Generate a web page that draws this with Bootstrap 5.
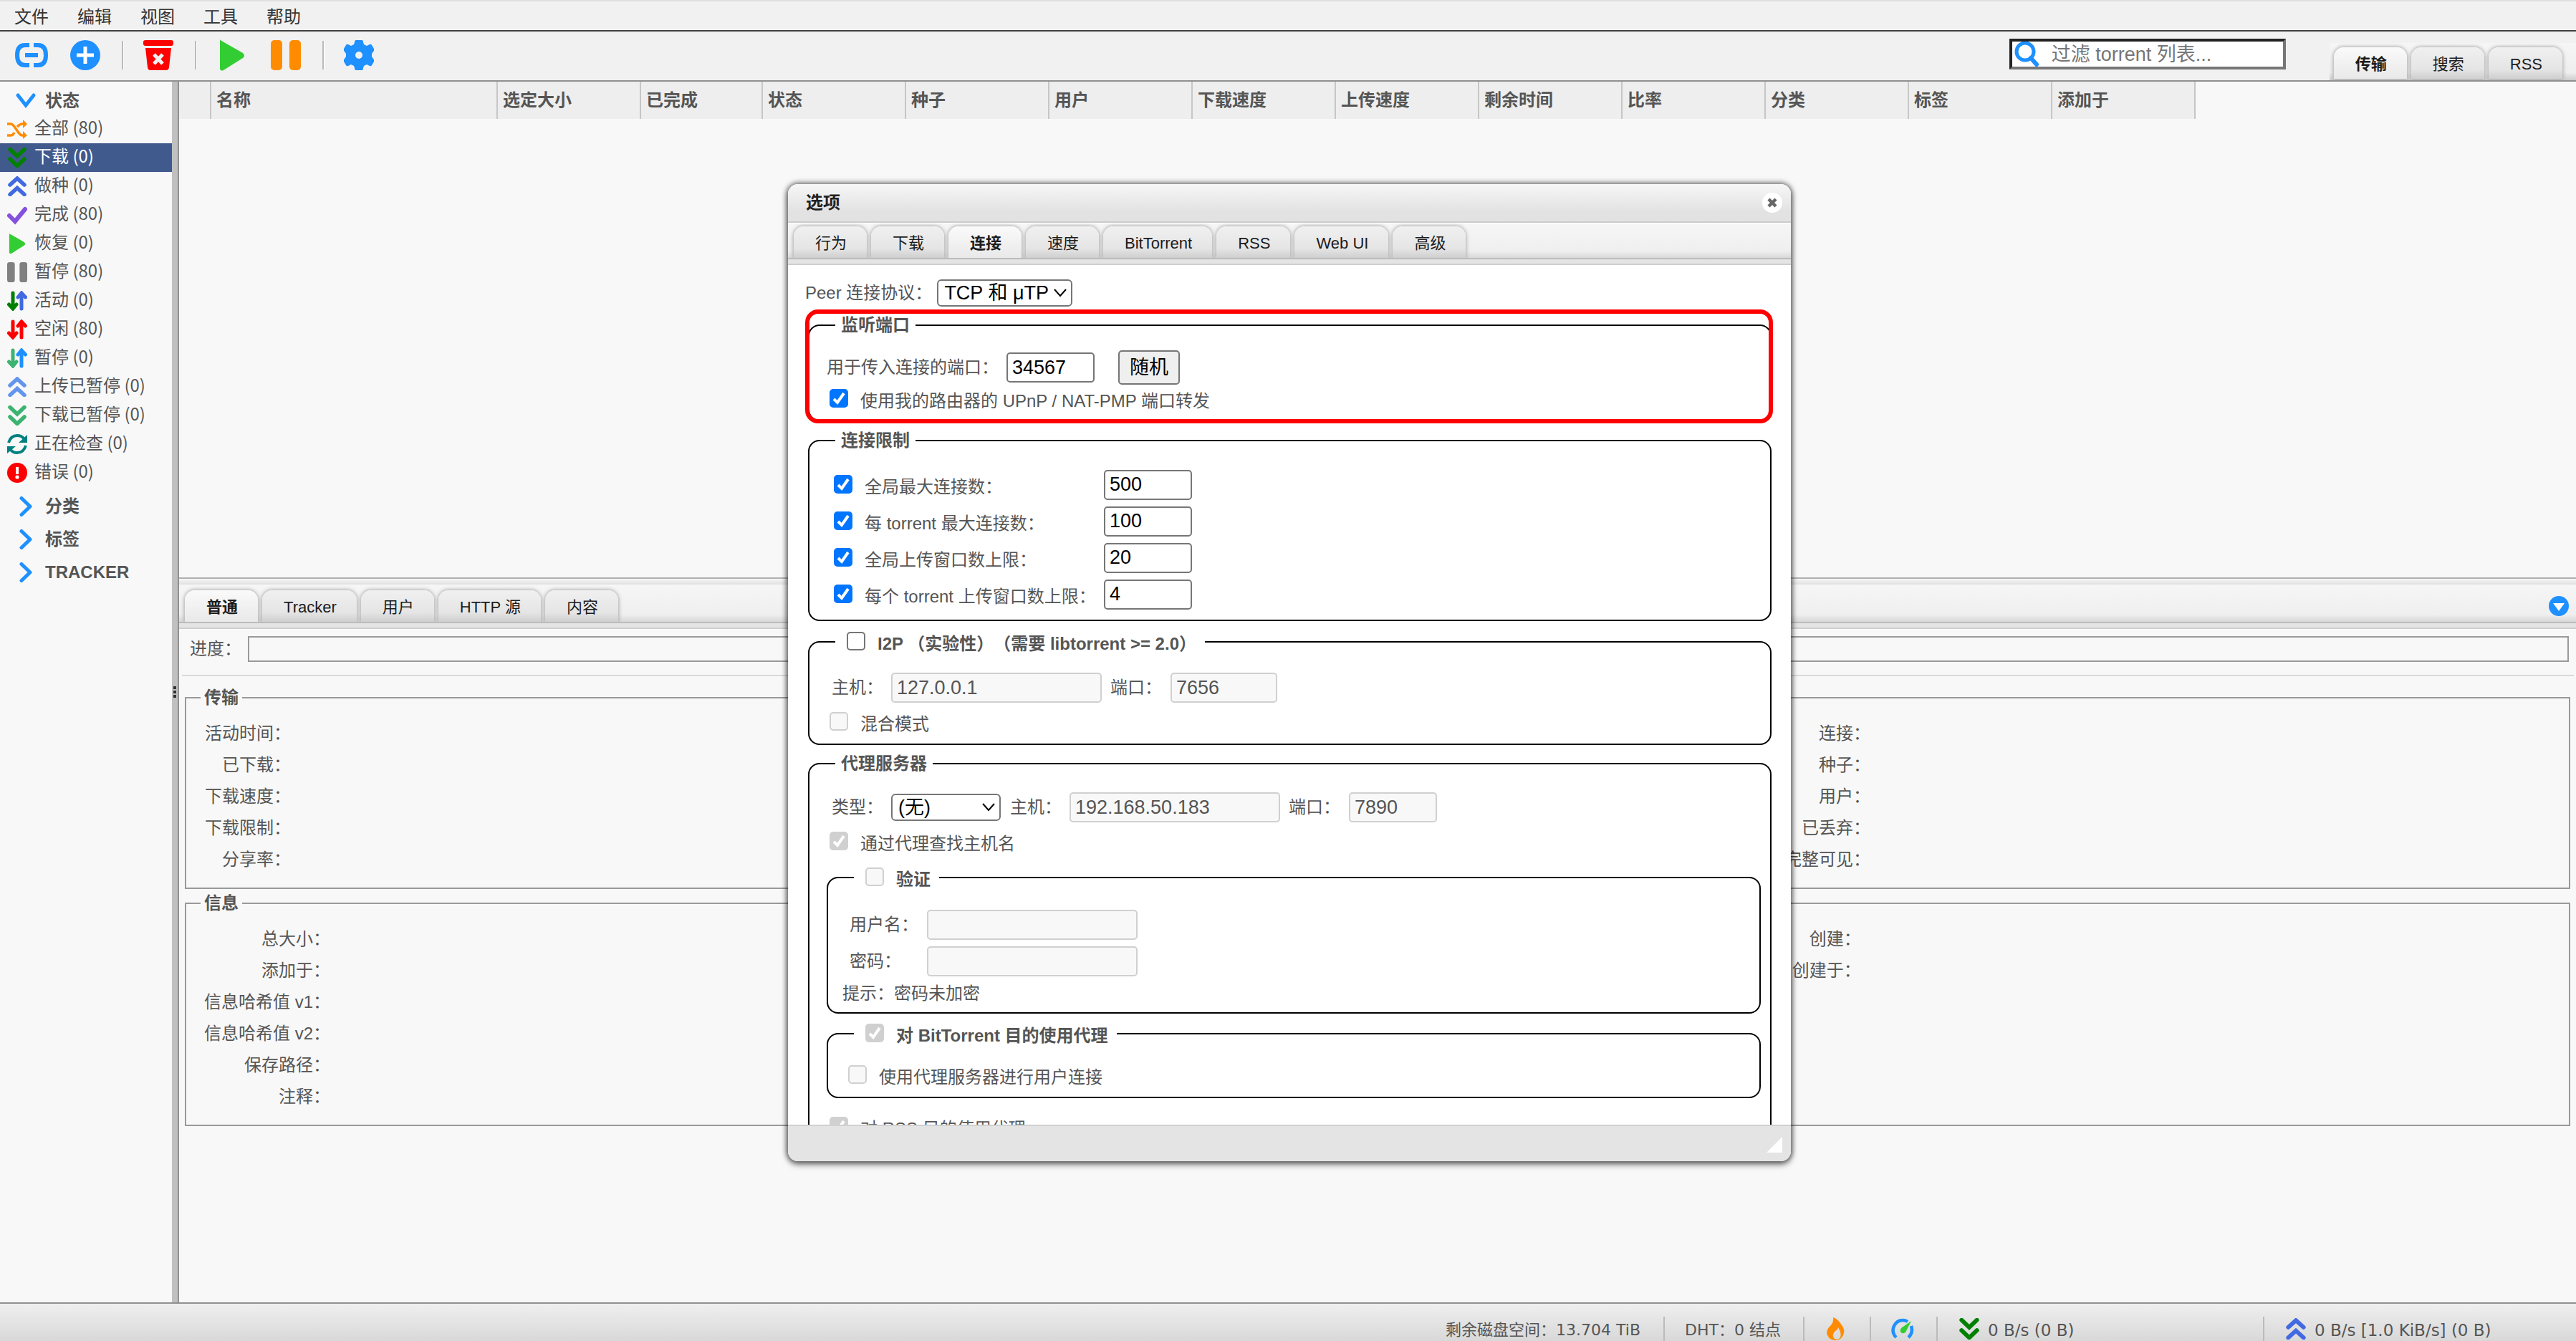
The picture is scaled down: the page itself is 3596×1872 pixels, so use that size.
<!DOCTYPE html>
<html lang="zh-CN">
<head>
<meta charset="utf-8">
<meta name="viewport" content="width=device-width, initial-scale=1">
<title>qBittorrent Web UI</title>
<link rel="stylesheet" href="https://cdn.jsdelivr.net/npm/bootstrap@5.3.0/dist/css/bootstrap.min.css">
<script defer src="https://cdn.jsdelivr.net/npm/bootstrap@5.3.0/dist/js/bootstrap.bundle.min.js"></script>
<style>
:root{--ui:"Liberation Sans","Noto Sans CJK SC",sans-serif}
body{font-family:var(--ui);font-size:24px;line-height:30px;color:#555;background:#f8f8f8;text-spacing-trim:space-all}
svg{display:block;flex:none}
a,a:hover{color:inherit;text-decoration:none}
button{font-family:inherit}
/* menu and toolbar */
.menu-strip{height:44px;padding-top:3px;background:#f1f1f1;border-top:2px solid #e0e0e0;border-bottom:2px solid #404040}
.menu-strip a{color:#333;padding:0 20px}
.tool-strip{height:70px;background:#f1f1f1;border-bottom:2px solid #909090}
.tool-btn{border:0;background:none;padding:0}
.tool-icons{padding-left:20px;height:66px}
.tool-icons .tool-btn{margin-right:30px}
.tool-sep{width:3px;height:40px;background:linear-gradient(90deg,#bbb 66%,#fff 66%);margin-right:27px}
.filter-box{width:386px;height:43px;margin:10px 61px 0 0;border:4px solid;border-color:#222 #777 #777 #222;background:#fff;padding-left:3px}
.filter-box input{border:0;outline:0;background:none;font-size:27px;line-height:34px;padding:0;min-width:0;flex:1;color:#333;margin-left:16px}
.filter-box input::placeholder{color:#757575;opacity:1}
/* tabs */
.tabs{padding-left:8px;gap:6px}
.tab-item{height:44px;border:0;padding:3px 28px 0 30px;font-size:22px;line-height:40px;color:#1c1c1c;border-radius:14px 14px 0 0;background:linear-gradient(#f0f0f0,#e5e5e5 70%,#cfcfcf);box-shadow:0 0 5px 1px #aaa}
.tab-item.active{font-weight:700;background:linear-gradient(#fafafa,#e9e9e9)}
.tab-track{background:linear-gradient(#f6f6f6,#efefef 80%,#d8d8d8);overflow:hidden}
.tab-base{height:10px;background:#e4e4e4;border-top:2px solid #bcbcbc;border-bottom:2px solid #cecece}
.main-tabs{height:52px;padding:0 19px 2px 6px;background:linear-gradient(#f6f6f6,#eee 80%,#ccc);overflow:hidden}
.fold-btn{margin-right:10px}
/* sidebar */
.side{width:240px;padding-top:6px}
.side-head{height:46px;padding:0 0 0 21px;gap:12px;font-weight:700;border:0;background:none;color:#555;width:100%}
.side-head.opened{height:40px;padding-top:2px}
.side ul{margin:0 0 4px}
.side li a{height:40px;padding:0 0 6px 10px;gap:10px;font-family:"Noto Sans CJK SC",sans-serif;line-height:34px;white-space:nowrap}
.side li svg{margin-top:5px}
.side li a.active{background:#415a8d;color:#fff}
.split{width:10px;background:#c0c0c0;border-right:2px solid #909090}
.grip{width:4px;height:16px;margin:844px 0 0 2px;background:repeating-linear-gradient(#333 0 4px,#c0c0c0 4px 6px)}
/* torrent table */
.tor-table{table-layout:fixed;width:2814px}
.tor-table th{height:52px;background:#eee;border-right:2px solid #c6c6c6;padding:0 0 0 7px;font-weight:700;color:#555}
/* lower panel */
.lower{height:1012px;border-top:2px solid #b0b0b0}
.lower-strip{height:8px;background:linear-gradient(#f6f6f6,#e0e0e0)}
.prog{height:36px;border:2px solid #999;margin:0 10px 0 9px;flex:1}
.prog-row{padding:10px 0 18px 15px}
.rule{height:2px;background:#dadada;margin:0 3px 0 4px}
.grp{border:2px solid #999;margin:15px 8px 0;padding:0 25px 17px}
.grp+.grp{margin-top:5px}
.grp legend{float:none;width:auto;margin:0 0 0 -5px;padding:0 5px;font-size:24px;line-height:30px;font-weight:700}
.grp table{width:100%;table-layout:fixed;margin-top:13px}
.grp th{height:44px;padding:0;font-weight:400;text-align:right;white-space:nowrap}
/* dialog */
.opt-win{position:absolute;left:1100px;top:257px;width:1400px;background:#fff;border-radius:14px;box-shadow:0 0 7px 2px rgba(0,0,0,.55),0 5px 10px rgba(0,0,0,.35);overflow:hidden}
.opt-title{height:54px;padding:0 12px 0 25px;background:linear-gradient(#f6f6f6,#e2e2e2 75%);border-bottom:2px solid #ccc;color:#222;font-size:24px;font-weight:700}
.opt-tabs{height:49px;padding-top:6px;border-top:1px solid #fff}
.opt-body{height:1200px;overflow:hidden;padding:18px 27px 0 28px;position:relative}
.opt-foot{height:51px;background:#e4e4e4;border-top:2px solid #d0d0d0;padding:15px 12px}
.mark-box{position:absolute;left:24px;right:25px;top:62px;height:159px;border:6px solid red;border-radius:18px;pointer-events:none}
.fs{border:2px solid #000;border-radius:16px;padding:0 24px;min-width:0}
.fs .fs{padding:0 20px;margin-right:-11px}
.fs legend{float:none;width:auto;height:30px;margin:0 0 0 12px;padding:0 8px;font-size:24px;line-height:30px;font-weight:700}
.fs .fs legend{margin-left:16px}
.fs legend.with-box{padding:6px 12px 0 16px}
.line-a{height:48px}
.line-b{height:51px}
.line-c{height:54px}
.tick{display:flex;align-items:center;gap:17px}
.tick.col-label{width:377px;padding-top:6px}
.tick input{appearance:none;width:26px;height:26px;margin:0 0 8px;border:2px solid #767676;border-radius:5px;background:#fff;flex:none}
.tick input:checked{border-color:#0075ff;background:#0075ff url("data:image/svg+xml,%3Csvg xmlns='http://www.w3.org/2000/svg' viewBox='0 0 22 22'%3E%3Cpath d='M4 12l5 5L18 4' fill='none' stroke='%23fff' stroke-width='4'/%3E%3C/svg%3E") center/22px no-repeat}
.tick input:disabled{border-color:#d0d0d0;background-color:#f8f8f8}
.tick input:disabled:checked{background-color:#d0d0d0}
.box-in{height:42px;border:2px solid #767676;border-radius:5px;padding:0 6px;font-size:27px;line-height:36px;color:#000;background:#fff;font-family:var(--ui)}
.box-in:disabled{border-color:#d0d0d0;background:#f8f8f8;color:#555}
.box-sel{appearance:none;height:38px;border:2px solid #767676;border-radius:6px;padding:0 8px;font-family:var(--ui);font-size:27px;line-height:34px;color:#000;background:#fff url("data:image/svg+xml,%3Csvg xmlns='http://www.w3.org/2000/svg' viewBox='0 0 18 12'%3E%3Cpath d='M1 1l8 9 8-9' fill='none' stroke='%23000' stroke-width='2'/%3E%3C/svg%3E") right 6px center/18px 12px no-repeat}
.w-s{width:123px}.w-m{width:149px}.w-l{width:294px}
.rand-btn{height:48px;border:2px solid #767676;border-radius:5px;background:#efefef;color:#000;font-size:27px;line-height:40px;padding:0 14px;margin-left:33px}
/* status bar */
.status{height:54px;border-top:2px solid #909090;background:linear-gradient(#efefef,#d8d8d8);font-family:"DejaVu Sans","Noto Sans CJK SC",sans-serif;font-size:22px;padding-top:18px}
.status>div{border-left:2px solid #bbb;padding:3px 0 0 28px;white-space:nowrap}
.status>.free-space{border:0;padding-right:32px}
.status svg{margin-bottom:4px}
.status .rate{font-size:23px;gap:10px}
</style>
</head>
<body class="d-flex flex-column vh-100 overflow-hidden position-relative">
<svg width="0" height="0" class="position-absolute">
<symbol id="dn" viewBox="0 0 28 28"><path d="M4 2.500L14 12 24 2.500M4 16L14 25.500 24 16" fill="none" stroke="currentColor" stroke-width="5.500" stroke-linecap="round"/></symbol>
<symbol id="up" viewBox="0 0 28 28"><path d="M4 12L14 3 24 12M4 25.500L14 16.500 24 25.500" fill="none" stroke="currentColor" stroke-width="5.500" stroke-linecap="round"/></symbol>
<symbol id="rt" viewBox="0 0 28 28"><path d="M8 2.500L20 14 8 25.500" fill="none" stroke="#1e90ff" stroke-width="5" stroke-linecap="round" stroke-linejoin="round"/></symbol>
<symbol id="play" viewBox="0 0 36 46"><path d="M1 1l0 41q1 4 5 2L33 27q4-3 0-7L5 4Q2 3 1 1z" fill="#32cd32"/></symbol>
<symbol id="pause" viewBox="0 0 42 42"><rect width="16" height="42" rx="5"/><rect x="26" width="16" height="42" rx="5"/></symbol>
</svg>

<nav class="menu-strip d-flex align-items-center flex-shrink-0" aria-label="菜单">
<a href="#">文件</a><a href="#">编辑</a><a href="#">视图</a><a href="#">工具</a><a href="#">帮助</a>
</nav>

<header class="tool-strip d-flex flex-shrink-0">
<div class="tool-icons d-flex align-items-center me-auto">
<button class="tool-btn" type="button" aria-label="添加链接"><svg width="48" height="42" viewBox="0 0 48 42"><path d="M21 7H15Q4 7 4 21t11 14h6M27 7h6q11 0 11 14T33 35h-6" fill="none" stroke="#1e90ff" stroke-width="6"/><path d="M15 18h18v6H15z" fill="#1e90ff"/></svg></button>
<button class="tool-btn" type="button" aria-label="添加文件"><svg width="42" height="42" viewBox="0 0 42 42"><circle cx="21" cy="21" r="21" fill="#1e90ff"/><path d="M21 9v24M9 21h24" stroke="#fff" stroke-width="5"/></svg></button>
<span class="tool-sep"></span>
<button class="tool-btn" type="button" aria-label="删除"><svg width="42" height="42" viewBox="0 0 42 42"><path d="M3 0h36q3 0 3 3v2q0 3-3 3H3Q0 8 0 5V3q0-3 3-3zM3 11h36l-3 27q-.5 4-4 4H10q-3.500 0-4-4z" fill="red"/><path d="M15 20l12 13M27 20L15 33" stroke="#f1f1f1" stroke-width="5"/></svg></button>
<span class="tool-sep"></span>
<button class="tool-btn" type="button" aria-label="恢复"><svg width="46" height="46" viewBox="-4 0 46 46"><use href="#play" width="36" height="46"/></svg></button>
<button class="tool-btn" type="button" aria-label="暂停"><svg width="42" height="42" fill="#ff8c00"><use href="#pause"/></svg></button>
<span class="tool-sep"></span>
<button class="tool-btn" type="button" aria-label="选项"><svg width="42" height="42" viewBox="0 0 42 42"><path fill-rule="evenodd" fill="#1e90ff" d="M17 0h8q2 0 2 3l1 3 4 2 4-2q2-1 3 1l3 5q1 2-1 4l-2 3v4l2 3q2 2 1 4l-3 5q-1 2-3 1l-4-2-4 2-1 3q0 3-2 3h-8q-2 0-2-3l-1-3-4-2-4 2q-2 1-3-1l-3-5q-1-2 1-4l2-3v-4l-2-3q-2-2-1-4l3-5q1-2 3-1l4 2 4-2 1-3q0-3 2-3zM21 16a5 5 0 100 10 5 5 0 000-10z"/></svg></button>
</div>
<label class="filter-box d-flex align-items-center"><svg width="36" height="36" viewBox="0 0 36 36"><circle cx="15" cy="14" r="12" fill="none" stroke="#1e90ff" stroke-width="5"/><path d="M23 23l8 9" stroke="#1e90ff" stroke-width="6" stroke-linecap="round"/></svg><input type="text" placeholder="过滤 torrent 列表..." aria-label="过滤 torrent 列表"></label>
<div class="main-tabs tabs d-flex align-items-end align-self-end">
<button class="tab-item active" type="button">传输</button><button class="tab-item" type="button">搜索</button><button class="tab-item" type="button">RSS</button>
</div>
</header>

<div class="d-flex flex-grow-1 overflow-hidden">
<aside class="side flex-shrink-0">
<button type="button" class="side-head opened d-flex align-items-center"><svg width="30" height="24" viewBox="0 0 30 24"><path d="M4 4l11 14L26 4" fill="none" stroke="#1e90ff" stroke-width="5" stroke-linecap="round"/></svg>状态</button>
<ul class="list-unstyled">
<li><a href="#" class="d-flex align-items-center"><svg width="28" height="28" viewBox="0 0 28 28" fill="none" stroke="#ff8c00" stroke-width="3.500"><path d="M0 7h5q3 0 8 8t8 8h3M0 23h5q3 0 5-4M14 11q4-4 7-4h3"/><path d="M22 1l6 6-6 6zM22 17l6 6-6 5z" fill="#ff8c00" stroke="none"/></svg>全部 (80)</a></li>
<li><a href="#" class="d-flex align-items-center active"><svg width="28" height="28" color="green"><use href="#dn"/></svg>下载 (0)</a></li>
<li><a href="#" class="d-flex align-items-center"><svg width="28" height="28" color="#4169e1"><use href="#up"/></svg>做种 (0)</a></li>
<li><a href="#" class="d-flex align-items-center"><svg width="28" height="28" viewBox="0 0 28 28"><path d="M3 15l8 8L25 6" fill="none" stroke="#8450dc" stroke-width="6" stroke-linecap="round"/></svg>完成 (80)</a></li>
<li><a href="#" class="d-flex align-items-center"><svg width="28" height="30" viewBox="-2 0 28 30"><use href="#play" width="24" height="30"/></svg>恢复 (0)</a></li>
<li><a href="#" class="d-flex align-items-center"><svg width="28" height="28" viewBox="0 0 42 42" fill="#808080"><use href="#pause" width="42" height="42"/></svg>暂停 (80)</a></li>
<li><a href="#" class="d-flex align-items-center"><svg width="28" height="28" viewBox="0 0 28 28" fill="none" stroke-width="5" stroke-linecap="round"><path d="M8 3v21M2.500 19L8 25l5-6" stroke="green"/><path d="M20 25V4M15 9l5-6 5.500 6" stroke="#4169e1"/></svg>活动 (0)</a></li>
<li><a href="#" class="d-flex align-items-center"><svg width="28" height="28" viewBox="0 0 28 28" fill="none" stroke-width="5" stroke-linecap="round" stroke="red"><path d="M8 3v21M2.500 19L8 25l5-6M20 25V4M15 9l5-6 5.500 6"/></svg>空闲 (80)</a></li>
<li><a href="#" class="d-flex align-items-center"><svg width="28" height="28" viewBox="0 0 28 28" fill="none" stroke-width="5" stroke-linecap="round"><path d="M8 3v21M2.500 19L8 25l5-6" stroke="#3cb371"/><path d="M20 25V4M15 9l5-6 5.500 6" stroke="#1e90ff"/></svg>暂停 (0)</a></li>
<li><a href="#" class="d-flex align-items-center"><svg width="28" height="28" color="#6495ed"><use href="#up"/></svg>上传已暂停 (0)</a></li>
<li><a href="#" class="d-flex align-items-center"><svg width="28" height="28" color="#3cb371"><use href="#dn"/></svg>下载已暂停 (0)</a></li>
<li><a href="#" class="d-flex align-items-center"><svg width="28" height="28" viewBox="0 0 28 28"><path d="M2 12Q5 2 14 2q6 0 9 4M26 16q-3 10-12 10-6 0-9-4" fill="none" stroke="#008080" stroke-width="4"/><path d="M28 1v11H16zM0 27V17h12z" fill="#008080"/></svg>正在检查 (0)</a></li>
<li><a href="#" class="d-flex align-items-center"><svg width="28" height="28" viewBox="0 0 28 28"><circle cx="14" cy="14" r="14" fill="red"/><path d="M12 6h4v10h-4z" fill="#fff"/><circle cx="14" cy="20" r="2.600" fill="#fff"/></svg>错误 (0)</a></li>
</ul>
<button type="button" class="side-head d-flex align-items-center"><svg width="30" height="28" viewBox="0 0 28 28"><use href="#rt"/></svg>分类</button>
<button type="button" class="side-head d-flex align-items-center"><svg width="30" height="28" viewBox="0 0 28 28"><use href="#rt"/></svg>标签</button>
<button type="button" class="side-head d-flex align-items-center"><svg width="30" height="28" viewBox="0 0 28 28"><use href="#rt"/></svg>TRACKER</button>
</aside>
<div class="split flex-shrink-0"><div class="grip"></div></div>

<main class="d-flex flex-column flex-grow-1 overflow-hidden">
<div class="flex-grow-1 overflow-hidden">
<table class="tor-table">
<colgroup><col style="width:44px"><col style="width:400px"><col style="width:200px"><col style="width:170px"><col span="10" style="width:200px"></colgroup>
<thead><tr><th></th><th>名称</th><th>选定大小</th><th>已完成</th><th>状态</th><th>种子</th><th>用户</th><th>下载速度</th><th>上传速度</th><th>剩余时间</th><th>比率</th><th>分类</th><th>标签</th><th>添加于</th></tr></thead>
</table>
</div>
<section class="lower flex-shrink-0">
<div class="lower-strip"></div>
<div class="tab-track tabs d-flex align-items-end pt-2">
<button class="tab-item active" type="button">普通</button><button class="tab-item" type="button">Tracker</button><button class="tab-item" type="button">用户</button><button class="tab-item" type="button">HTTP 源</button><button class="tab-item" type="button">内容</button>
<button class="tool-btn fold-btn ms-auto align-self-center" type="button" aria-label="折叠"><svg width="28" height="28" viewBox="0 0 28 28"><circle cx="14" cy="14" r="14" fill="#1e90ff"/><path d="M6 10h16l-8 11z" fill="#fff"/></svg></button>
</div>
<div class="tab-base"></div>
<div class="prog-row d-flex align-items-center"><span>进度：</span><div class="prog" role="progressbar" aria-label="进度"></div></div>
<div class="rule"></div>
<fieldset class="grp"><legend>传输</legend>
<table><colgroup><col style="width:121px"><col><col style="width:170px"><col style="width:29%"></colgroup>
<tr><th scope="row">活动时间：</th><td></td><th scope="row">连接：</th><td></td></tr>
<tr><th scope="row">已下载：</th><td></td><th scope="row">种子：</th><td></td></tr>
<tr><th scope="row">下载速度：</th><td></td><th scope="row">用户：</th><td></td></tr>
<tr><th scope="row">下载限制：</th><td></td><th scope="row">已丢弃：</th><td></td></tr>
<tr><th scope="row">分享率：</th><td></td><th scope="row">最后完整可见：</th><td></td></tr>
</table></fieldset>
<fieldset class="grp"><legend>信息</legend>
<table><colgroup><col style="width:176px"><col><col style="width:170px"><col style="width:29.400%"></colgroup>
<tr><th scope="row">总大小：</th><td></td><th scope="row">创建：</th><td></td></tr>
<tr><th scope="row">添加于：</th><td></td><th scope="row">创建于：</th><td></td></tr>
<tr><th scope="row">信息哈希值 v1：</th><td></td><td></td><td></td></tr>
<tr><th scope="row">信息哈希值 v2：</th><td></td><td></td><td></td></tr>
<tr><th scope="row">保存路径：</th><td></td><td></td><td></td></tr>
<tr><th scope="row">注释：</th><td></td><td></td><td></td></tr>
</table></fieldset>
</section>
</main>
</div>

<footer class="status d-flex flex-shrink-0 justify-content-end">
<div class="free-space d-flex align-items-center">剩余磁盘空间：13.704 TiB</div>
<div class="d-flex align-items-center" style="width:195px">DHT：0 结点</div>
<div class="d-flex align-items-center" style="width:93px"><svg width="30" height="32" viewBox="0 0 30 32"><path fill-rule="evenodd" d="M12 0q6 2 10 8 8 9 4 17-3 7-11 7T4 25Q1 18 8 12q5-5 4-12zM19 14q-1 4-4 5-6 6-1 11 5 2 8-2 2-6-3-14z" fill="#ff8c00"/></svg></div>
<div class="d-flex align-items-center" style="width:93px"><svg width="32" height="30" viewBox="0 0 32 30"><path d="M7 27Q0 20 4 11 8 3 16 3q4 0 7 2M28 11q3 10-4 16" fill="none" stroke="#1e90ff" stroke-width="4.500"/><path d="M28 4l-7 14q-2 4-6 3-4-2-1-7z" fill="#32cd32"/></svg></div>
<div class="rate d-flex align-items-center" style="width:456px"><svg width="32" height="30" color="green"><use href="#dn"/></svg>0 B/s (0 B)</div>
<div class="rate d-flex align-items-center" style="width:437px"><svg width="32" height="30" color="#4169e1"><use href="#up"/></svg>0 B/s [1.0 KiB/s] (0 B)</div>
</footer>

<section class="opt-win" role="dialog" aria-labelledby="optTitle">
<div class="opt-title d-flex align-items-center justify-content-between"><span id="optTitle">选项</span><button class="tool-btn" type="button" aria-label="关闭"><svg width="28" height="28" viewBox="0 0 28 28"><circle cx="14" cy="14" r="14" fill="#fff"/><path d="M9 9l10 10M19 9L9 19" stroke="#666" stroke-width="4.500"/></svg></button></div>
<div class="tab-track opt-tabs tabs d-flex align-items-end">
<button class="tab-item" type="button">行为</button><button class="tab-item" type="button">下载</button><button class="tab-item active" type="button">连接</button><button class="tab-item" type="button">速度</button><button class="tab-item" type="button">BitTorrent</button><button class="tab-item" type="button">RSS</button><button class="tab-item" type="button">Web UI</button><button class="tab-item" type="button">高级</button>
</div>
<div class="tab-base"></div>
<form class="opt-body">
<div class="d-flex align-items-center" style="height:42px;margin-left:-4px"><label for="proto">Peer 连接协议：</label><select id="proto" class="box-sel" style="width:189px;margin-left:7px"><option>TCP 和 μTP</option></select></div>

<fieldset class="fs" style="margin-top:9px;padding-bottom:3px"><legend>监听端口</legend>
<div class="line-a d-flex align-items-center" style="margin-top:20px"><label for="port">用于传入连接的端口：</label><input id="port" class="box-in w-s" value="34567" style="margin-left:11px"><button type="button" class="rand-btn">随机</button></div>
<label class="tick ps-1" style="height:46px"><input type="checkbox" checked>使用我的路由器的 UPnP / NAT-PMP 端口转发</label>
</fieldset>

<fieldset class="fs" style="margin-top:12px;padding-bottom:10px"><legend>连接限制</legend>
<div style="margin-top:21px;padding-left:10px">
<div class="line-b d-flex align-items-center"><label class="tick col-label"><input type="checkbox" checked>全局最大连接数：</label><input class="box-in w-s" value="500" aria-label="全局最大连接数"></div>
<div class="line-b d-flex align-items-center"><label class="tick col-label"><input type="checkbox" checked>每 torrent 最大连接数：</label><input class="box-in w-s" value="100" aria-label="每 torrent 最大连接数"></div>
<div class="line-b d-flex align-items-center"><label class="tick col-label"><input type="checkbox" checked>全局上传窗口数上限：</label><input class="box-in w-s" value="20" aria-label="全局上传窗口数上限"></div>
<div class="line-b d-flex align-items-center"><label class="tick col-label"><input type="checkbox" checked>每个 torrent 上传窗口数上限：</label><input class="box-in w-s" value="4" aria-label="每个 torrent 上传窗口数上限"></div>
</div></fieldset>

<fieldset class="fs" style="margin-top:14px"><legend class="with-box"><label class="tick" style="height:24px"><input type="checkbox">I2P （实验性）（需要 libtorrent &gt;= 2.0）</label></legend>
<div class="line-a d-flex align-items-center" style="margin-top:25px;padding-left:7px"><label for="ih">主机：</label><input id="ih" class="box-in w-l" value="127.0.0.1" disabled style="margin:0 12px 0 11px"><label for="ip">端口：</label><input id="ip" class="box-in w-m" value="7656" disabled style="margin-left:12px"></div>
<label class="tick line-c ps-1"><input type="checkbox" disabled>混合模式</label>
</fieldset>

<fieldset class="fs" style="margin-top:11px"><legend>代理服务器</legend>
<div class="line-a d-flex align-items-center" style="margin-top:22px;padding-left:7px"><label for="pt">类型：</label><select id="pt" class="box-sel" style="width:153px;margin:0 13px 0 11px"><option>(无)</option></select><label for="ph">主机：</label><input id="ph" class="box-in w-l" value="192.168.50.183" disabled style="margin:0 12px 0 11px"><label for="pp">端口：</label><input id="pp" class="box-in w-s" value="7890" disabled style="margin-left:12px"></div>
<label class="tick line-c ps-1"><input type="checkbox" checked disabled>通过代理查找主机名</label>
<fieldset class="fs" style="margin-top:5px;padding-bottom:6px"><legend class="with-box"><label class="tick" style="height:24px"><input type="checkbox" disabled>验证</label></legend>
<div style="margin-top:25px;padding-left:10px">
<div class="line-b d-flex align-items-center"><label for="un" style="width:108px">用户名：</label><input id="un" class="box-in w-l" disabled></div>
<div class="line-b d-flex align-items-center"><label for="pw" style="width:108px">密码：</label><input id="pw" type="password" class="box-in w-l" disabled></div>
</div>
<div style="line-height:40px">提示：密码未加密</div>
</fieldset>
<fieldset class="fs" style="margin-top:13px"><legend class="with-box"><label class="tick" style="height:24px"><input type="checkbox" checked disabled>对 BitTorrent 目的使用代理</label></legend>
<label class="tick line-c ps-2" style="margin-top:19px"><input type="checkbox" disabled>使用代理服务器进行用户连接</label>
</fieldset>
<label class="tick line-c ps-1" style="margin-top:16px"><input type="checkbox" checked disabled>对 RSS 目的使用代理</label>
</fieldset>
<div class="mark-box"></div>
</form>
<div class="opt-foot d-flex justify-content-end"><svg width="22" height="22" viewBox="0 0 22 22"><path d="M22 0v22H0z" fill="#fff"/></svg></div>
</section>
</body>
</html>
